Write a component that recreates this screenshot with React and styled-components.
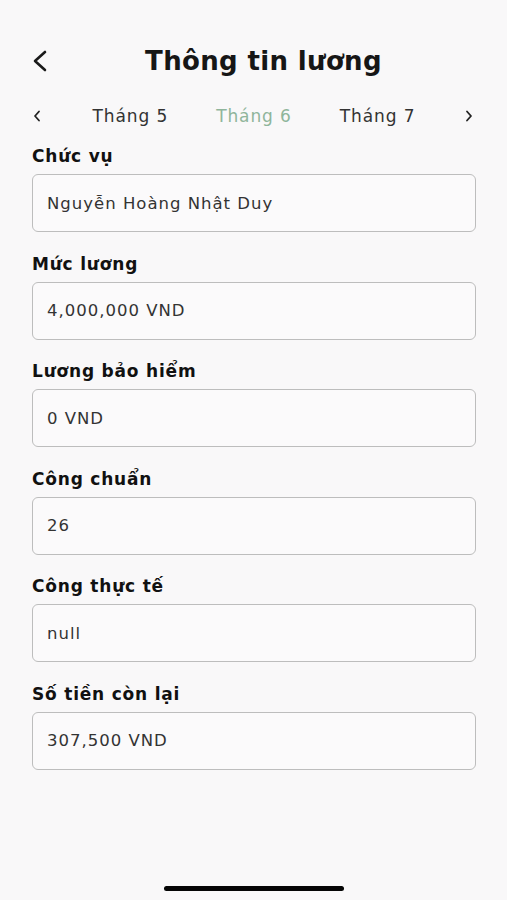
import React from "react";
import styled, { createGlobalStyle } from "styled-components";

const Global = createGlobalStyle`
  html, body { margin: 0; padding: 0; background: #f9f8f9; }
  body { font-family: "DejaVu Sans", "Noto Sans", sans-serif; color: #111; }
`;

const Screen = styled.div`
  width: 507px;
  height: 900px;
  display: flex;
  flex-direction: column;
  background: #f9f8f9;
  box-sizing: border-box;
  padding-top: 40px;
`;

const Header = styled.div`
  height: 42px;
  display: grid;
  grid-template-columns: 60px 1fr 40px;
  align-items: center;
`;

const BackButton = styled.button`
  border: 0;
  background: none;
  padding: 0 0 0 32px;
  display: flex;
  align-items: center;
  cursor: pointer;
`;

const Title = styled.h1`
  margin: 0;
  text-align: center;
  font-size: 26px;
  font-weight: 700;
  letter-spacing: 0.35px;
  color: #161616;
`;

const Tabs = styled.div`
  margin-top: 19px;
  height: 30px;
  display: flex;
  align-items: center;
  justify-content: space-between;
  padding: 0 32px 0 31px;
`;

const Arrow = styled.button`
  border: 0;
  background: none;
  padding: 0;
  width: 12px;
  display: flex;
  align-items: center;
  justify-content: center;
`;

const TabList = styled.div`
  display: flex;
  gap: 48px;
  margin-left: 2px;
`;

const Tab = styled.span`
  font-size: 17px;
  letter-spacing: 0.9px;
  color: ${(p) => (p.$active ? "#8fb59b" : "#333")};
`;

const Form = styled.div`
  padding: 0 31px 0 32px;
  margin-top: 13px;
  display: flex;
  flex-direction: column;
  gap: 19.5px;
`;

const Field = styled.div`
  display: flex;
  flex-direction: column;
  gap: 6px;
`;

const Label = styled.label`
  font-size: 17px;
  font-weight: 700;
  letter-spacing: 0.8px;
  color: #111;
  line-height: 24px;
`;

const Box = styled.div`
  height: 58px;
  box-sizing: border-box;
  border: 1.5px solid #bdbdbd;
  border-radius: 6px;
  background: #fbfafb;
  display: flex;
  align-items: center;
  padding: 0 14px;
  font-size: 16.5px;
  letter-spacing: 1px;
  color: #333;
`;

const Spacer = styled.div`
  flex: 1;
`;

const HomeBar = styled.div`
  align-self: center;
  width: 180px;
  height: 5px;
  border-radius: 3px;
  background: #050505;
  margin-bottom: 9px;
`;

const fields = [
  ["Chức vụ", "Nguyễn Hoàng Nhật Duy"],
  ["Mức lương", "4,000,000 VND"],
  ["Lương bảo hiểm", "0 VND"],
  ["Công chuẩn", "26"],
  ["Công thực tế", "null"],
  ["Số tiền còn lại", "307,500 VND"],
];

export default function App() {
  return (
    <>
      <Global />
      <Screen>
        <Header>
          <BackButton aria-label="back">
            <svg width="16" height="22" viewBox="0 0 16 22">
              <path d="M13 2 L3 11 L13 20" fill="none" stroke="#1a1a1a" strokeWidth="2.6" strokeLinecap="round" strokeLinejoin="round" />
            </svg>
          </BackButton>
          <Title>Thông tin lương</Title>
          <div />
        </Header>
        <Tabs>
          <Arrow aria-label="prev">
            <svg width="8" height="12" viewBox="0 0 8 12">
              <path d="M6 1.5 L2 6 L6 10.5" fill="none" stroke="#222" strokeWidth="1.8" strokeLinecap="round" strokeLinejoin="round" />
            </svg>
          </Arrow>
          <TabList>
            <Tab>Tháng 5</Tab>
            <Tab $active>Tháng 6</Tab>
            <Tab>Tháng 7</Tab>
          </TabList>
          <Arrow aria-label="next">
            <svg width="8" height="12" viewBox="0 0 8 12">
              <path d="M2 1.5 L6 6 L2 10.5" fill="none" stroke="#222" strokeWidth="1.8" strokeLinecap="round" strokeLinejoin="round" />
            </svg>
          </Arrow>
        </Tabs>
        <Form>
          {fields.map(([l, v]) => (
            <Field key={l}>
              <Label>{l}</Label>
              <Box>{v}</Box>
            </Field>
          ))}
        </Form>
        <Spacer />
        <HomeBar />
      </Screen>
    </>
  );
}
